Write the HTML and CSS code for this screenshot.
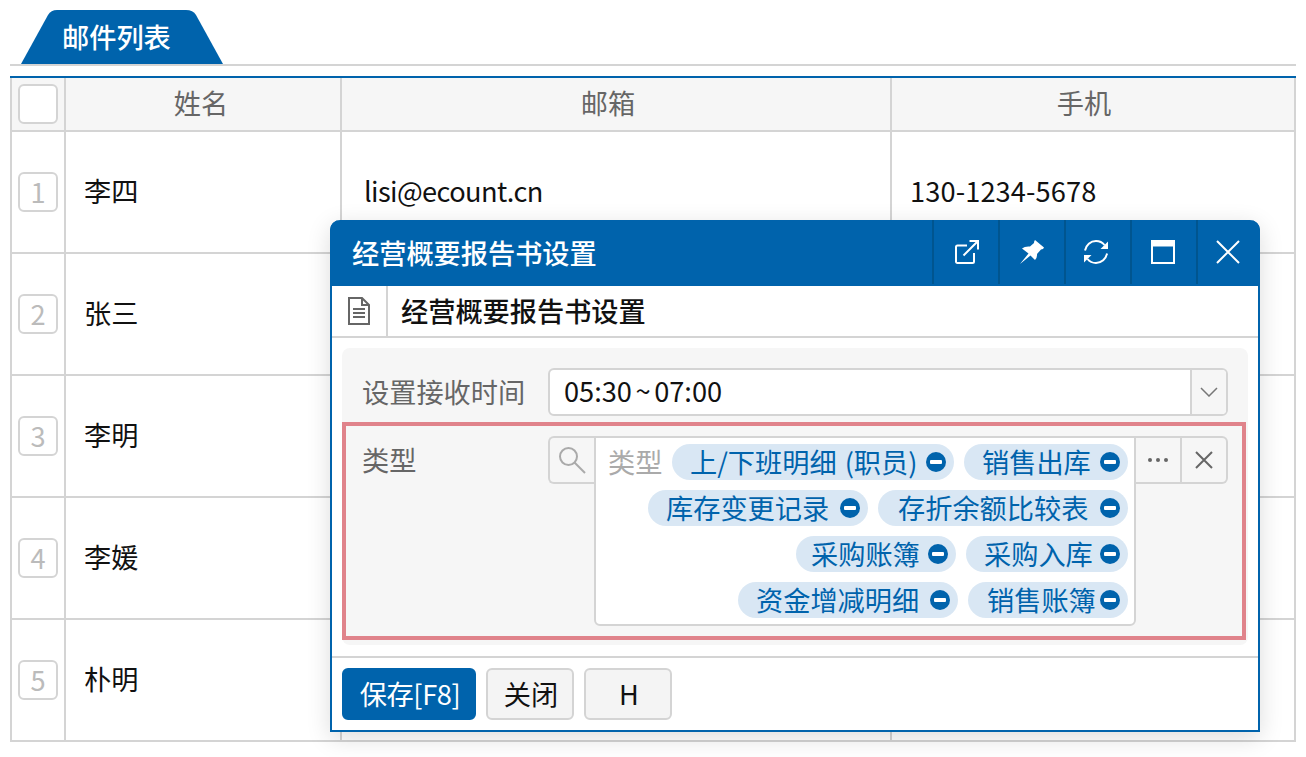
FILE: index.html
```html
<!DOCTYPE html>
<html lang="zh-CN">
<head>
<meta charset="utf-8">
<title>邮件列表</title>
<link rel="stylesheet" href="styles.css">
</head>
<body>
<div class="page">
  <div class="tabs"><div class="tab">邮件列表</div></div>
  <table class="grid">
    <colgroup><col class="c0"><col class="c1"><col class="c2"><col class="c3"></colgroup>
    <thead>
      <tr><th class="num"><span class="box"></span></th><th class="th-name">姓名</th><th class="th-mail">邮箱</th><th class="th-phone">手机</th></tr>
    </thead>
    <tbody>
      <tr><td class="num"><span class="box">1</span></td><td>李四</td><td class="email">lisi@ecount.cn</td><td class="phone">130-1234-5678</td></tr>
      <tr><td class="num"><span class="box">2</span></td><td>张三</td><td></td><td></td></tr>
      <tr><td class="num"><span class="box">3</span></td><td>李明</td><td></td><td></td></tr>
      <tr><td class="num"><span class="box">4</span></td><td>李媛</td><td></td><td></td></tr>
      <tr><td class="num"><span class="box">5</span></td><td>朴明</td><td></td><td></td></tr>
    </tbody>
  </table>
</div>

<section class="modal">
  <header class="modal-head">
    <h1 class="modal-title">经营概要报告书设置</h1>
    <div class="head-btn"><svg width="24" height="24" viewBox="0 0 24 24" fill="none" stroke="#fff" stroke-width="2"><path d="M12 5.500H2.500A1.500 1.500 0 0 0 1 7V22A1.500 1.500 0 0 0 2.500 23H17.500A1.500 1.500 0 0 0 19 21.500V13"/><path d="M8.500 15.500L23 1M14.500 1H23V9.500"/></svg></div>
    <div class="head-btn"><svg width="24" height="24" viewBox="0 0 24 24" fill="#fff"><path d="M15 0L24 7.500L23 9L21 9.500L17 14Q17.500 17 15 20L10.500 15.500L0 24L8.500 13.500L2 8.500Q5 6 10 6.500L14 3Q14 1 15 0Z"/></svg></div>
    <div class="head-btn"><svg width="24" height="24" viewBox="0 0 24 24" fill="none" stroke="#fff" stroke-width="2"><path d="M1 10.500C2 5 6.500 1 12 1C15.500 1 18.500 2.500 20.500 5"/><path d="M23 13.500C22 19 17.500 23 12 23C8.500 23 5.500 21.500 3.500 19"/><path d="M24 1.500V9H16.500Z" fill="#fff" stroke="none"/><path d="M0 22.500V15H7.500Z" fill="#fff" stroke="none"/></svg></div>
    <div class="head-btn"><svg width="24" height="24" viewBox="0 0 24 24" fill="none" stroke="#fff" stroke-width="2"><rect x="1" y="1" width="22" height="22"/><path d="M1 4H23" stroke-width="5"/></svg></div>
    <div class="head-btn"><svg width="24" height="24" viewBox="0 0 24 24" fill="none" stroke="#fff" stroke-width="2"><path d="M1 1L23 23M23 1L1 23"/></svg></div>
  </header>
  <div class="sub-head">
    <div class="doc-icon"><svg width="22" height="28" viewBox="0 0 22 28" fill="none" stroke="#666" stroke-width="2"><path d="M1 1H14L21 8V27H1Z"/><path d="M14 1V8H21M5 12H17M5 16H17M5 20H17"/></svg></div>
    <div class="sub-title">经营概要报告书设置</div>
  </div>
  <div class="panel">
    <div class="row-time">
      <label class="field-label">设置接收时间</label>
      <div class="select">
        <span class="select-value">05:30 ~ 07:00</span>
        <span class="select-btn"><svg width="18" height="10" viewBox="0 0 18 10" fill="none" stroke="#777" stroke-width="1.500"><path d="M1 1L9 9L17 1"/></svg></span>
      </div>
    </div>
    <div class="row-type">
      <label class="field-label">类型</label>
      <div class="picker">
        <span class="search-btn"><svg width="30" height="30" viewBox="0 0 30 30" fill="none" stroke="#aaa" stroke-width="2"><circle cx="11.500" cy="11.500" r="8.500"/><path d="M17.500 17.500L28 28"/></svg></span>
        <div class="tag-box">
          <span class="placeholder">类型</span>
          <span class="tag">上/下班明细 (职员)<i class="minus"></i></span>
          <span class="tag">销售出库<i class="minus"></i></span>
          <span class="tag">库存变更记录<i class="minus"></i></span>
          <span class="tag">存折余额比较表<i class="minus"></i></span>
          <span class="tag">采购账簿<i class="minus"></i></span>
          <span class="tag">采购入库<i class="minus"></i></span>
          <span class="tag">资金增减明细<i class="minus"></i></span>
          <span class="tag">销售账簿<i class="minus"></i></span>
        </div>
        <div class="picker-btns">
          <span class="pick-btn more"><i></i><i></i><i></i></span>
          <span class="pick-btn clear"><svg width="20" height="20" viewBox="0 0 20 20" fill="none" stroke="#666" stroke-width="2"><path d="M2 2L18 18M18 2L2 18"/></svg></span>
        </div>
      </div>
    </div>
  </div>
  <footer class="modal-foot">
    <button class="btn primary">保存[F8]</button>
    <button class="btn">关闭</button>
    <button class="btn">H</button>
  </footer>
</section>
</body>
</html>
```

FILE: styles.css
```css
* { box-sizing: border-box; }
html, body { margin: 0; height: 100%; overflow: hidden; background: #fff; }
body { font-family: "Noto Sans CJK SC", "Noto Sans", sans-serif; font-size: 27.2px; color: #111; position: relative; }

.page { padding: 10px 10px 0; }
.tabs { border-bottom: 2px solid #d4d4d4; height: 56px; padding-left: 11px; margin-bottom: 10px; }
.tab {
  width: 202px; height: 54px; background: #0063ac; color: #fff; padding-left: 41px;
  line-height: 53px; font-weight: 500;
  clip-path: path("M0 54L27 5Q30 0 36 0L165 0Q172 0 175 5L202 54Z");
}

.grid { width: 1286px; table-layout: fixed; border-collapse: separate; border-spacing: 0; border-top: 2px solid #0063ac; }
.c0 { width: 56px; } .c1 { width: 276px; } .c2 { width: 550px; } .c3 { width: 404px; }
.grid th, .grid td { border-right: 2px solid #d4d4d4; border-bottom: 2px solid #d4d4d4; padding: 0 18px 4px; }
.grid th:first-child, .grid td:first-child { border-left: 2px solid #d4d4d4; }
.grid th { height: 54px; background: #f6f6f6; color: #666; font-weight: 400; text-align: center; }
.grid .th-name { padding-right: 22px; }
.grid .th-mail { padding-right: 34px; }
.grid .th-phone { padding-right: 36px; }
.grid td { height: 122px; text-align: left; }
.grid td.email { padding-left: 22px; letter-spacing: -0.6px; }
.grid td.phone { letter-spacing: 0.12px; }
.grid .num { padding: 0 6px; text-align: center; }
.box { display: block; width: 40px; height: 40px; border: 2px solid #d4d4d4; border-radius: 6px; background: #fff; color: #bbb; line-height: 35px; text-align: center; }

.modal {
  position: absolute; left: 330px; top: 220px; width: 930px; height: 512px;
  background: #fff; border: 2px solid #0063ac; border-top: 0; border-radius: 10px 10px 0 0;
  box-shadow: 0 6px 24px rgba(0,0,0,.14);
  display: flex; flex-direction: column;
}
.modal-head { height: 66px; margin: 0 -2px; background: #0063ac; border-radius: 10px 10px 0 0; display: flex; align-items: stretch; padding-left: 22px; flex: none; }
.modal-title { flex: 1; margin: 0; font-size: 27.2px; font-weight: 500; color: #fff; line-height: 64px; }
.head-btn { width: 66px; height: 64px; border-left: 2px solid #00558f; display: flex; align-items: center; justify-content: center; }
.head-btn:nth-of-type(1) { padding-left: 2px; }
.head-btn:nth-of-type(3) { padding-right: 4px; }
.head-btn:nth-of-type(4) { padding-right: 2px; }
.head-btn:nth-of-type(5) { width: 64px; padding-right: 2px; }

.sub-head { height: 52px; display: flex; border-bottom: 2px solid #d4d4d4; flex: none; }
.doc-icon { width: 56px; border-right: 2px solid #d4d4d4; display: flex; align-items: center; justify-content: center; }
.sub-title { padding-left: 13px; line-height: 48px; color: #111; font-weight: 500; }

.panel { margin: 10px 10px 0; width: 906px; height: 297px; background: #f6f6f6; border-radius: 8px; flex: none; }
.row-time { height: 74px; display: flex; align-items: flex-start; padding: 20px 20px 0; }
.field-label { width: 186px; color: #666; line-height: 46px; flex: none; }
.select { width: 680px; height: 48px; border: 2px solid #d4d4d4; border-radius: 6px; background: #fff; display: flex; margin-right: -4px; }
.select-value { flex: 1; padding-left: 14px; line-height: 41px; word-spacing: -2.5px; }
.select-btn { width: 36px; border-left: 2px solid #d4d4d4; background: #f6f6f6; border-radius: 0 4px 4px 0; display: flex; align-items: center; justify-content: center; }

.row-type { width: 904px; height: 218px; border: 4px solid #e0838b; padding: 10px 16px 0; display: flex; align-items: flex-start; }
.row-type .field-label { line-height: 46px; }
.picker { display: flex; align-items: flex-start; }
.search-btn { width: 46px; height: 48px; border: 2px solid #d4d4d4; border-right: 0; border-radius: 6px 0 0 6px; background: #f6f6f6; display: flex; align-items: center; justify-content: center; flex: none; }
.tag-box { width: 542px; height: 190px; border: 2px solid #d4d4d4; border-radius: 0 0 6px 6px; background: #fff; display: flex; flex-wrap: wrap; justify-content: flex-end; align-content: flex-start; gap: 10px; padding: 6px 6px 0; flex: none; }
.placeholder { color: #aaa; line-height: 34px; width: 54px; white-space: nowrap; flex: none; }
.tag { height: 36px; border-radius: 18px; background: #d9e7f4; color: #0063ac; padding: 0 8px 2px 18px; display: inline-flex; align-items: center; justify-content: space-between; white-space: nowrap; word-spacing: 2px; flex: none; }
.tag:nth-child(2) { width: 282px; }
.tag:nth-child(3) { width: 164px; }
.tag:nth-child(4) { width: 220px; }
.tag:nth-child(5) { width: 250px; padding-left: 20px; }
.tag:nth-child(6) { width: 160px; padding-left: 15px; }
.tag:nth-child(7) { width: 162px; }
.tag:nth-child(8) { width: 220px; }
.tag:nth-child(9) { width: 160px; padding-left: 19px; }
.minus { width: 20px; height: 20px; border-radius: 50%; background: #0063ac; margin-top: 2px; position: relative; flex: none; }
.minus::after { content: ""; position: absolute; left: 4px; right: 4px; top: 8px; height: 4px; background: #fff; border-radius: 1px; }
.picker-btns { display: flex; height: 48px; width: 92px; border: 2px solid #d4d4d4; border-left: 0; border-radius: 0 6px 6px 0; background: #f6f6f6; flex: none; }
.pick-btn { display: flex; align-items: center; justify-content: center; }
.more { width: 46px; gap: 4px; border-right: 2px solid #d4d4d4; }
.more i { width: 4px; height: 4px; border-radius: 50%; background: #666; }
.clear { flex: 1; }

.modal-foot { flex: 1; border-top: 2px solid #d4d4d4; margin-top: 11px; padding: 10px 10px 0; display: flex; gap: 10px; align-items: flex-start; }
.btn { width: 88px; height: 52px; border: 2px solid #d4d4d4; border-radius: 6px; background: #f4f4f4; font: inherit; color: #111; padding: 0 0 3px 2px; }
.btn.primary { width: 134px; background: #0063ac; border-color: #0063ac; color: #fff; letter-spacing: -0.4px; }
```
